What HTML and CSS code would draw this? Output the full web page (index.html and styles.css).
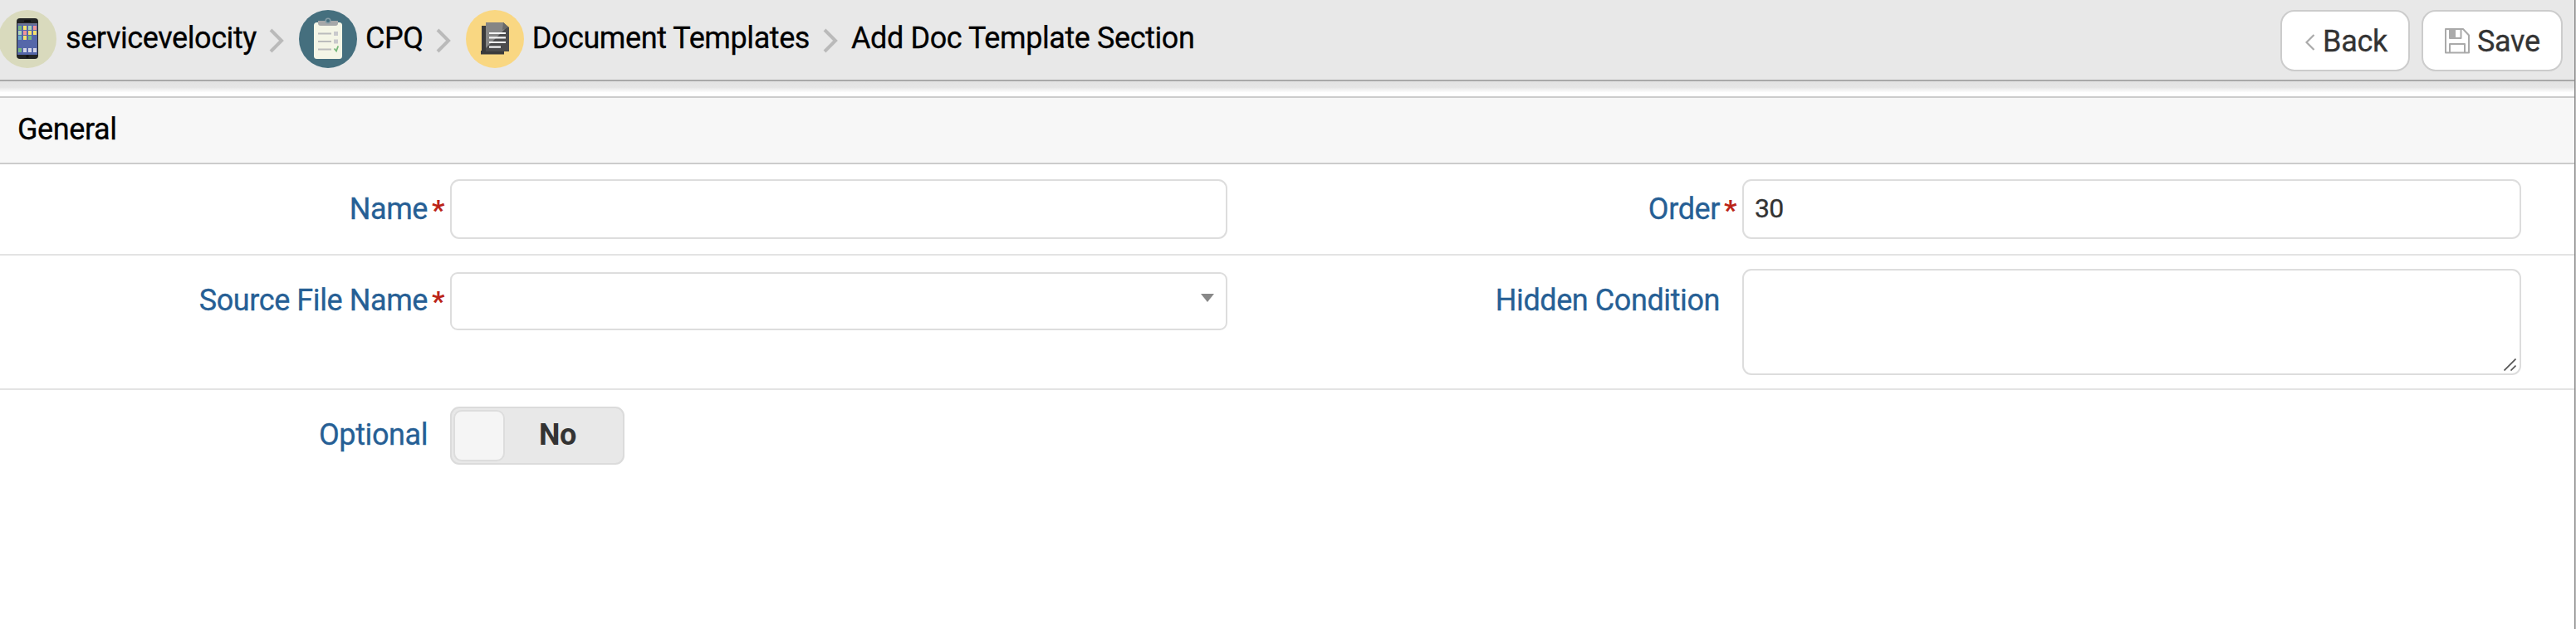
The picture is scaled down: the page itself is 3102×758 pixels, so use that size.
FILE: index.html
```
<!DOCTYPE html>
<html lang="en">
<head>
<meta charset="utf-8">
<title>Add Doc Template Section</title>
<link rel="stylesheet" href="styles.css">
</head>
<body>
<div class="page">
<header class="topbar">
  <nav class="crumbs">
    <svg class="badge first" viewBox="0 0 70 70"><circle cx="35" cy="35" r="35" fill="#d9dabd"/>
      <rect x="22" y="10" width="26" height="49" rx="4" fill="#222425"/><rect x="31" y="12.500" width="8" height="1.800" rx=".9" fill="#080808"/>
      <rect x="23" y="16" width="24" height="38" fill="#5567a9"/><rect x="23" y="16" width="24" height="2" fill="#6a7192"/>
      <g><path fill="#78b77b" d="M24 19h4v5h-4zM36 31h4v5h-4zM24 46h4v5h-4z"/><path fill="#f5e26b" d="M30 19h4v5h-4zM36 25h4v5h-4zM42 25h4v5h-4zM30 31h4v5h-4z"/><path fill="#aed3b0" d="M36 19h4v5h-4zM24 25h4v5h-4z"/><path fill="#ef9499" d="M42 19h4v5h-4zM30 25h4v5h-4z"/><path fill="#69aec9" d="M24 31h4v5h-4z"/><path fill="#d3d4e6" d="M30 46h4v5h-4zM36 46h4v5h-4zM42 46h4v5h-4z"/></g>
      <circle cx="35" cy="56" r="1.700" fill="#111"/></svg>
    <span class="label">servicevelocity</span>
    <svg class="chev" viewBox="0 0 18 30"><path d="M2 2l13 13L2 28"/></svg>
    <svg class="badge" viewBox="0 0 70 70"><circle cx="35" cy="35" r="35" fill="#456f7e"/>
      <rect x="18" y="15" width="34" height="44" rx="3.500" fill="#f4f5e6"/><path fill="#a6a8a9" d="M23 13h24v3a3 3 0 0 1-3 3H26a3 3 0 0 1-3-3z"/><circle cx="35" cy="13" r="2.800" fill="#456f7e" stroke="#879da6" stroke-width="1.600"/>
      <path d="M23 28.500h16M23 38h16M23 47.500h16" stroke="#bbbcbc" stroke-width="1.800"/><path fill="#c9c9cc" d="M42 26h5v5h-5zM42 35.500h5v5h-5z"/><path d="M42.500 46.500l2.500 3 2.200-6" fill="none" stroke="#76b779" stroke-width="1.800"/></svg>
    <span class="label short">CPQ</span>
    <svg class="chev" viewBox="0 0 18 30"><path d="M2 2l13 13L2 28"/></svg>
    <svg class="badge" viewBox="0 0 70 70"><circle cx="35" cy="35" r="35" fill="#f9d782"/>
      <path fill="#3a3a3b" d="M19 19h5v30h22v4.500H18V49h1z"/><path fill="#4b4b4c" d="M24 15h21l7 6v29H24z"/><path fill="#858585" d="M24 15h21l5 5-26 26z"/><path fill="#696969" d="M45 15l6 6-7 3z"/>
      <path d="M28 28h20M28 33.300h20M28 39h20M28 44.700h14" stroke="#f4f4f4" stroke-width="2.200"/></svg>
    <span class="label">Document Templates</span>
    <svg class="chev" viewBox="0 0 18 30"><path d="M2 2l13 13L2 28"/></svg>
    <span class="label last">Add Doc Template Section</span>
  </nav>
  <div class="actions">
    <button class="btn back"><svg class="arrow" viewBox="0 0 12 20"><path d="M10.500 1L1.500 10l9 9"/></svg>Back</button>
    <button class="btn save"><svg class="disk" viewBox="0 0 30 31"><path class="line" d="M1 1h21l7 7.500V29.500H1zM6 29.500V19h18v10.500M6 1v11h13.500V1"/><path class="solid" d="M5 1h8v11H5z"/></svg>Save</button>
  </div>
</header>
<div class="shade"></div>
<h2 class="section">General</h2>
<form class="form">
  <div class="row r1">
    <label class="cap">Name<b class="req">*</b></label><div class="field input"></div>
    <label class="cap">Order<b class="req">*</b></label><div class="field input">30</div>
  </div>
  <div class="row r2">
    <label class="cap">Source File Name<b class="req">*</b></label><div class="field select"><svg class="caret" viewBox="0 0 16 10"><path d="M0 0h16l-8 10z"/></svg></div>
    <label class="cap">Hidden Condition<b class="req"></b></label><div class="field area"><svg class="grip" viewBox="0 0 15 15"><path d="M.5 14.500l14-14M8.500 14.500l6-6"/></svg></div>
  </div>
  <div class="row r3">
    <label class="cap">Optional<b class="req"></b></label><div class="toggle"><span class="knob"></span><span class="state">No</span></div>
  </div>
</form>
</div>
<div class="edge"></div>
</body>
</html>
```
FILE: styles.css
```
* { box-sizing: border-box; }
body { margin: 0; display: flex; height: 758px; overflow: hidden; background: #fff; font-family: Roboto, "Liberation Sans", sans-serif; font-size: 36px; letter-spacing: -.41px; -webkit-text-stroke: .3px currentColor; color: #000; }
.page { width: 3100px; flex: none; }
.edge { width: 2px; background: linear-gradient(90deg, #888 50%, #bbb 50%); }
.topbar { height: 98px; display: flex; justify-content: space-between; background: #e8e8e8; border-bottom: 2px solid #a9a9a9; }
.crumbs { display: flex; align-items: flex-start; white-space: nowrap; }
.badge { width: 70px; height: 70px; margin-top: 12px; flex: none; }
.badge.first { margin-left: -2px; }
.label { line-height: 42px; margin: 25px 16px 0 10px; }
.badge.first + .label { margin-left: 11px; margin-right: 15px; }
.label.short { margin-right: 15px; }
.chev { width: 18px; height: 30px; margin: 34px 18px 0 0; flex: none; fill: none; stroke: #bababa; stroke-width: 4; }
.label.last { margin-left: -2px; }
.actions { display: flex; gap: 14px; padding: 12px 14px 0 0; }
.btn { height: 74px; padding: 1px 26px 0; display: flex; align-items: center; border: 2px solid #ccc; border-radius: 17px; background: #fff; color: #333; font: 36px/42px Roboto, sans-serif; letter-spacing: -.3px; -webkit-text-stroke: .3px currentColor; }
.back { width: 156px; padding-left: 28px; }
.save { width: 170px; }
.arrow { width: 12px; height: 20px; margin-right: 9px; margin-top: 2px; flex: none; fill: none; stroke: #aaa; stroke-width: 2.2; }
.disk { width: 30px; height: 31px; margin-right: 9px; flex: none; }
.disk .line { fill: none; stroke: #aaa; stroke-width: 2; stroke-linejoin: round; }
.disk .solid { fill: #aaa; }
.shade { height: 18px; background: linear-gradient(#e3e3e3 0, #e5e5e5 40%, #fff 75%); }
.section { margin: 0; height: 82px; padding-left: 21px; border-top: 2px solid #ccc; border-bottom: 2px solid #ccc; background: #f7f7f7; font-size: 36px; font-weight: 400; line-height: 76px; }
.row { display: grid; grid-template-columns: 542px 936px 620px 938px; align-items: start; border-bottom: 2px solid #e3e3e3; }
.r1 { height: 110px; padding-top: 18px; }
.r2 { height: 162px; padding-top: 16px; }
.r3 { height: 164px; padding-top: 20px; border: 0; }
.cap { display: flex; justify-content: flex-end; align-items: baseline; color: #265f95; line-height: 42px; margin-top: 15px; }
.r2 .cap { margin-top: 17px; }
.r3 .cap { margin-top: 13px; }
.req { width: 27px; padding-left: 5px; color: #bb2418; font-size: 34px; line-height: 40px; transform: translateY(1px); -webkit-text-stroke: 0; }
.field { border: 2px solid #ddd; border-radius: 11px; color: #333; }
.input { height: 72px; padding-left: 13px; font-size: 32px; line-height: 67px; letter-spacing: -.8px; }
.select { height: 70px; margin-top: 4px; border-radius: 9px; display: flex; justify-content: flex-end; padding: 24px 14px 0 0; }
.caret { width: 16px; height: 10px; fill: #888; }
.area { height: 128px; display: flex; justify-content: flex-end; align-items: flex-end; padding: 0 4px 3px 0; }
.grip { width: 15px; height: 15px; fill: none; stroke: #555; stroke-width: 1.7; }
.toggle { width: 210px; height: 70px; display: flex; align-items: center; padding: 2px; background: #e8e8e8; border: 2px solid #dbdbdb; border-radius: 11px; }
.knob { width: 62px; height: 62px; background: #f5f5f5; border: 2px solid #ddd; border-radius: 10px; }
.state { margin: -2px 0 0 41px; font-weight: 700; color: #333; line-height: 42px; -webkit-text-stroke: 0; }
```
